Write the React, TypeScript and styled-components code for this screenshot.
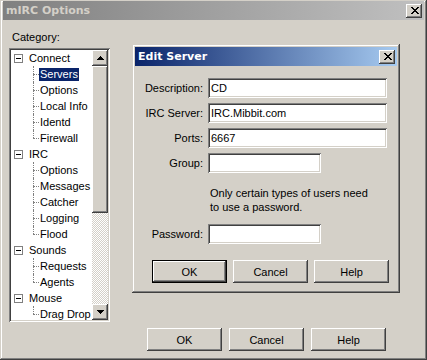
import React from 'react';
import styled, { createGlobalStyle, css } from 'styled-components';

const GlobalStyle = createGlobalStyle`
  html, body { margin: 0; padding: 0; background: #d4d0c8; }
  body { font-family: "Liberation Sans", Arial, sans-serif; font-size: 11px; color: #000; }
  * { box-sizing: border-box; }
`;

const raised = css`
  box-shadow: inset -1px -1px #404040, inset 1px 1px #fff, inset -2px -2px #808080, inset 2px 2px #d4d0c8;
`;
const frame = css`
  box-shadow: inset -1px -1px #404040, inset 1px 1px #d4d0c8, inset -2px -2px #808080, inset 2px 2px #fff;
`;
const sunken = css`
  box-shadow: inset 1px 1px #808080, inset -1px -1px #fff, inset 2px 2px #404040, inset -2px -2px #d4d0c8;
`;

const Window = styled.div`
  width: 427px;
  height: 360px;
  padding: 1px 3px 3px 3px;
  background: #d4d0c8;
  display: flex;
  flex-direction: column;
  ${frame}
`;

const TitleBar = styled.div<{ $active?: boolean }>`
  height: 19px;
  flex: none;
  display: flex;
  align-items: center;
  padding: 0 2px;
  background: ${(p) =>
    p.$active
      ? 'linear-gradient(to right, #0a246a, #a6caf0)'
      : 'linear-gradient(to right, #808080, #c0c0c0)'};
  color: ${(p) => (p.$active ? '#fff' : '#d4d0c8')};
  font-family: "DejaVu Sans", "Liberation Sans", sans-serif;
  font-weight: bold;
  font-size: 11px;
`;

const TitleText = styled.div`
  flex: 1;
  padding-left: 1px;
  white-space: nowrap;
`;

const CloseButton = styled.div`
  width: 16px;
  height: 14px;
  display: flex;
  align-items: center;
  justify-content: center;
  background: #d4d0c8;
  padding-left: 1px;
  ${raised}
`;

const Body = styled.div`
  display: grid;
  grid-template-columns: 101px 268px;
  column-gap: 22px;
  padding: 10px 0 0 6px;
  align-items: start;
`;

const LeftColumn = styled.div`
  display: flex;
  flex-direction: column;
`;

const CategoryLabel = styled.div`
  line-height: 14px;
  padding-left: 3px;
  margin-bottom: 4px;
`;

const TreeBox = styled.div`
  width: 101px;
  height: 274px;
  padding: 2px;
  background: #fff;
  display: flex;
  ${sunken}
`;

const TreeList = styled.div`
  flex: 1;
  overflow: hidden;
  display: flex;
  flex-direction: column;
`;

const RootRow = styled.div`
  height: 16px;
  flex: none;
  display: flex;
  align-items: center;
  padding-left: 3px;
  white-space: nowrap;
`;

const MinusBox = styled.div`
  width: 9px;
  height: 9px;
  border: 1px solid #808080;
  background: #fff;
  margin-right: 5px;
  display: flex;
  align-items: center;
  justify-content: center;
  &::before {
    content: '';
    width: 5px;
    height: 1px;
    background: #000;
  }
`;

const ChildRow = styled.div`
  height: 16px;
  flex: none;
  display: flex;
  align-items: center;
  padding-left: 22px;
  white-space: nowrap;
`;

const Branch = styled.div<{ $last?: boolean }>`
  position: relative;
  width: 6px;
  align-self: stretch;
  flex: none;
  &::before {
    content: '';
    position: absolute;
    left: 0;
    top: 0;
    height: ${(p) => (p.$last ? '8px' : '16px')};
    border-left: 1px dotted #808080;
  }
  &::after {
    content: '';
    position: absolute;
    left: 0;
    top: 8px;
    width: 6px;
    border-top: 1px dotted #808080;
  }
`;

const ItemLabel = styled.span<{ $selected?: boolean }>`
  padding: 0 1px;
  line-height: 13px;
  background: ${(p) => (p.$selected ? '#0a246a' : 'transparent')};
  color: ${(p) => (p.$selected ? '#fff' : '#000')};
`;

const ScrollBar = styled.div`
  width: 16px;
  flex: none;
  display: flex;
  flex-direction: column;
`;

const ScrollButton = styled.div`
  width: 16px;
  height: 16px;
  flex: none;
  background: #d4d0c8;
  display: flex;
  align-items: center;
  justify-content: center;
  ${raised}
`;

const Thumb = styled.div`
  height: 147px;
  flex: none;
  background: #d4d0c8;
  ${raised}
`;

const Track = styled.div`
  flex: 1;
  background-image: conic-gradient(#fff 25%, #d4d0c8 0 50%, #fff 0 75%, #d4d0c8 0);
  background-size: 2px 2px;
`;

const Dialog = styled.div`
  margin-top: 14px;
  width: 268px;
  height: 249px;
  padding: 3px;
  background: #d4d0c8;
  display: flex;
  flex-direction: column;
  ${frame}
`;

const DialogBody = styled.div`
  padding: 12px 0 0 8px;
  display: flex;
  flex-direction: column;
`;

const Form = styled.div`
  display: grid;
  grid-template-columns: 60px auto;
  column-gap: 5px;
  row-gap: 5px;
  align-items: center;
  justify-items: start;
`;

const FieldLabel = styled.label`
  justify-self: end;
  white-space: nowrap;
`;

const TextField = styled.input<{ $wide?: boolean }>`
  width: ${(p) => (p.$wide ? '179px' : '113px')};
  height: 20px;
  border: none;
  outline: none;
  padding: 0 3px;
  background: #fff;
  font: inherit;
  color: #000;
  ${sunken}
`;

const Note = styled.div`
  grid-column: 2;
  line-height: 14px;
  padding-left: 2px;
  margin: 8px 0 5px;
`;

const ButtonRow = styled.div<{ $inset: number; $gap: number; $top: number }>`
  display: flex;
  gap: ${(p) => p.$gap}px;
  padding-left: ${(p) => p.$inset}px;
  margin-top: ${(p) => p.$top}px;
`;

const Button = styled.button<{ $default?: boolean }>`
  width: 75px;
  height: 23px;
  border: none;
  padding: 0;
  background: #d4d0c8;
  font: inherit;
  color: #000;
  ${(p) =>
    p.$default
      ? css`
          box-shadow: inset 0 0 0 1px #000, inset -2px -2px #404040, inset 2px 2px #fff,
            inset -3px -3px #808080, inset 3px 3px #d4d0c8;
        `
      : raised}
`;

const PixelIcon = ({ rows }: { rows: string[] }) => {
  const w = rows[0].length;
  const h = rows.length;
  const rects: React.ReactNode[] = [];
  rows.forEach((r, y) =>
    r.split('').forEach((c, x) => {
      if (c === 'X') rects.push(<rect key={`${x}-${y}`} x={x} y={y} width={1} height={1} />);
    })
  );
  return (
    <svg width={w} height={h} viewBox={`0 0 ${w} ${h}`} shapeRendering="crispEdges" fill="#000">
      {rects}
    </svg>
  );
};

const closeGlyph = ['XX....XX', '.XX..XX.', '..XXXX..', '...XX...', '..XXXX..', '.XX..XX.', 'XX....XX'];
const upGlyph = ['...X...', '..XXX..', '.XXXXX.', 'XXXXXXX'];
const downGlyph = ['XXXXXXX', '.XXXXX.', '..XXX..', '...X...'];

const tree = [
  { label: 'Connect', children: ['Servers', 'Options', 'Local Info', 'Identd', 'Firewall'] },
  { label: 'IRC', children: ['Options', 'Messages', 'Catcher', 'Logging', 'Flood'] },
  { label: 'Sounds', children: ['Requests', 'Agents'] },
  { label: 'Mouse', children: ['Drag Drop'] },
];

export default function App() {
  return (
    <>
      <GlobalStyle />
      <Window>
        <TitleBar>
          <TitleText>mIRC Options</TitleText>
          <CloseButton>
            <PixelIcon rows={closeGlyph} />
          </CloseButton>
        </TitleBar>
        <Body>
          <LeftColumn>
            <CategoryLabel>Category:</CategoryLabel>
            <TreeBox>
              <TreeList>
                {tree.map((node) => (
                  <React.Fragment key={node.label}>
                    <RootRow>
                      <MinusBox />
                      <ItemLabel>{node.label}</ItemLabel>
                    </RootRow>
                    {node.children.map((c, i) => (
                      <ChildRow key={c + i}>
                        <Branch $last={i === node.children.length - 1} />
                        <ItemLabel $selected={node.label === 'Connect' && i === 0}>{c}</ItemLabel>
                      </ChildRow>
                    ))}
                  </React.Fragment>
                ))}
              </TreeList>
              <ScrollBar>
                <ScrollButton>
                  <PixelIcon rows={upGlyph} />
                </ScrollButton>
                <Thumb />
                <Track />
                <ScrollButton>
                  <PixelIcon rows={downGlyph} />
                </ScrollButton>
              </ScrollBar>
            </TreeBox>
          </LeftColumn>
          <Dialog>
            <TitleBar $active>
              <TitleText>Edit Server</TitleText>
              <CloseButton>
                <PixelIcon rows={closeGlyph} />
              </CloseButton>
            </TitleBar>
            <DialogBody>
              <Form>
                <FieldLabel>Description:</FieldLabel>
                <TextField $wide readOnly defaultValue="CD" />
                <FieldLabel>IRC Server:</FieldLabel>
                <TextField $wide readOnly defaultValue="IRC.Mibbit.com" />
                <FieldLabel>Ports:</FieldLabel>
                <TextField $wide readOnly defaultValue="6667" />
                <FieldLabel>Group:</FieldLabel>
                <TextField readOnly defaultValue="" />
                <Note>
                  Only certain types of users need
                  <br />
                  to use a password.
                </Note>
                <FieldLabel>Password:</FieldLabel>
                <TextField readOnly defaultValue="" />
              </Form>
              <ButtonRow $inset={9} $gap={6} $top={16}>
                <Button $default>OK</Button>
                <Button>Cancel</Button>
                <Button>Help</Button>
              </ButtonRow>
            </DialogBody>
          </Dialog>
        </Body>
        <ButtonRow $inset={144} $gap={7} $top={6}>
          <Button>OK</Button>
          <Button>Cancel</Button>
          <Button>Help</Button>
        </ButtonRow>
      </Window>
    </>
  );
}
